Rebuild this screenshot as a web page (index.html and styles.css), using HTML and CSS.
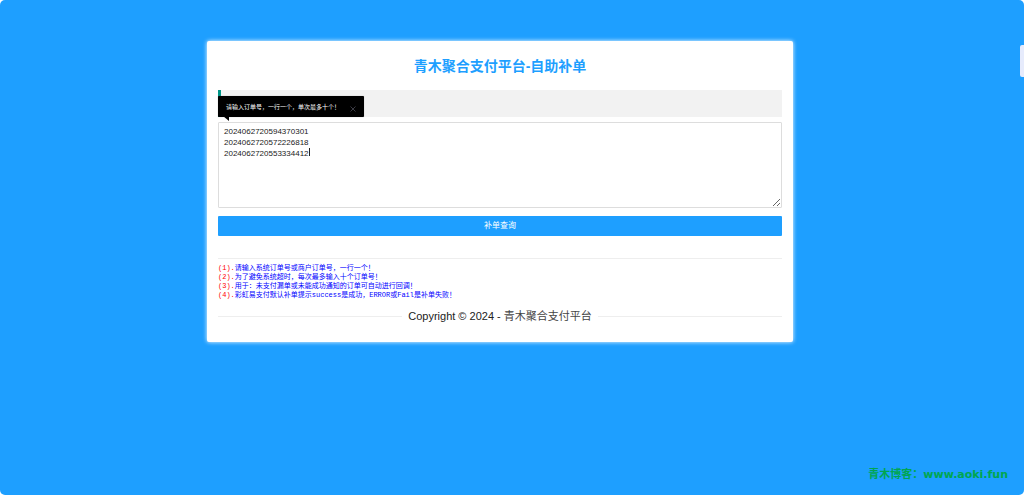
FILE: index.html
```html
<!DOCTYPE html>
<html lang="zh-CN">
<head>
<meta charset="utf-8">
<title>青木聚合支付平台-自助补单</title>
<link rel="stylesheet" href="styles.css">
</head>
<body>
<div class="page">
  <main class="card">
    <h1 class="title">青木聚合支付平台-自助补单</h1>
    <form class="form">
      <div class="quote">
        <div class="tip" role="tooltip">
          <label for="orders">请输入订单号，一行一个，单次最多十个！</label>
          <button class="tip-close" type="button" aria-label="关闭">
            <svg viewBox="0 0 6 6" width="6" height="6"><path d="M.5 .5l5 5M5.5 .5l-5 5" fill="none" stroke="currentColor" stroke-width=".8"/></svg>
          </button>
          <svg class="tip-tail" viewBox="0 0 6 5" width="6" height="5"><path d="M0 0h6v5z" fill="#000"/></svg>
        </div>
      </div>
      <div class="field">
        <textarea class="orders" id="orders">2024062720594370301
2024062720572226818
2024062720553334412</textarea>
        <span class="caret"></span>
      </div>
      <button class="submit" type="button">补单查询</button>
    </form>
    <hr class="rule">
    <div class="notes">
      <p><span class="num">(1).</span>请输入系统订单号或商户订单号，一行一个！</p>
      <p><span class="num">(2).</span>为了避免系统超时，每次最多输入十个订单号！</p>
      <p><span class="num">(3).</span>用于：未支付漏单或未能成功通知的订单可自动进行回调！</p>
      <p><span class="num">(4).</span>彩虹易支付默认补单提示success是成功，ERROR或Fail是补单失败！</p>
    </div>
    <footer class="copyright"><span>Copyright © 2024 - <a class="site">青木聚合支付平台</a></span></footer>
  </main>
  <div class="side-tab"></div>
  <div class="watermark">青木博客：www.aoki.fun</div>
</div>
</body>
</html>
```
FILE: styles.css
```css
* { box-sizing: border-box; }
body {
  margin: 0;
  background: #fff;
  font-family: "Liberation Sans", "Noto Sans CJK SC", sans-serif;
  color: #222;
}
.page {
  position: relative;
  min-height: 100vh;
  padding: 41px 231px 41px 207px;
  border-radius: 5px;
  background: #1e9fff;
}
.card {
  padding: 14px 11px 18px;
  border-radius: 2px;
  background: #fff;
  box-shadow: 0 0 4px #fff;
}
.title {
  margin: 0 0 13px;
  font-size: 14px;
  line-height: 22px;
  text-align: center;
  color: #1e9fff;
}
.form { display: flex; flex-direction: column; }
.quote {
  position: relative;
  height: 27px;
  margin-bottom: 5px;
  border-left: 3px solid #009688;
  background: #f2f2f2;
}
.tip {
  position: absolute;
  top: 6px;
  left: -3px;
  display: flex;
  align-items: center;
  gap: 10px;
  height: 21px;
  padding: 0 8px;
  border-radius: 1px;
  background: #000;
  color: #fff;
  font-size: 6px;
  line-height: 10px;
  white-space: nowrap;
  box-shadow: 0 0 1px #0006;
}
.tip-close {
  display: flex;
  margin-top: 5px;
  padding: 0;
  border: 0;
  background: none;
  color: #4a4a55;
}
.tip-tail { position: absolute; top: 20px; left: 5px; }
.field { position: relative; margin-bottom: 8px; }
.orders {
  display: block;
  width: 100%;
  height: 86px;
  padding: 3px 5px;
  border: 1px solid #ddd;
  border-radius: 1px;
  outline: 0;
  background: #fff;
  color: #222;
  font: 8px/11px "Liberation Sans", "Noto Sans CJK SC", sans-serif;
  resize: vertical;
}
.caret {
  position: absolute;
  top: 26px;
  left: 91px;
  width: 1px;
  height: 8px;
  background: #222;
}
.submit {
  height: 20px;
  padding: 0;
  border: 0;
  border-radius: 1px;
  background: #1e9fff;
  color: #fff;
  font: 8px/20px "Liberation Sans", "Noto Sans CJK SC", sans-serif;
}
.rule {
  height: 1px;
  margin: 22px 0 5px;
  border: 0;
  background: #eee;
}
.notes {
  color: #00f;
  font: 7px/9px "Liberation Mono", "Noto Sans CJK SC", monospace;
}
.notes p { margin: 0; }
.num { color: #f00; }
.copyright {
  display: flex;
  align-items: center;
  gap: 6px;
  margin-top: 8px;
  font-size: 11px;
  line-height: 16px;
}
.copyright::before, .copyright::after {
  content: "";
  flex: 1;
  height: 1px;
  background: #eee;
}
.site { color: #444; }
.side-tab {
  position: absolute;
  top: 45px;
  right: 0;
  width: 4px;
  height: 32px;
  border-radius: 2px 0 0 2px;
  background: #e6ebfc;
}
.watermark {
  position: absolute;
  right: 16px;
  bottom: 12px;
  color: #00a650;
  font: bold 11px/16px "DejaVu Sans", "Noto Sans CJK SC", sans-serif;
}
```
